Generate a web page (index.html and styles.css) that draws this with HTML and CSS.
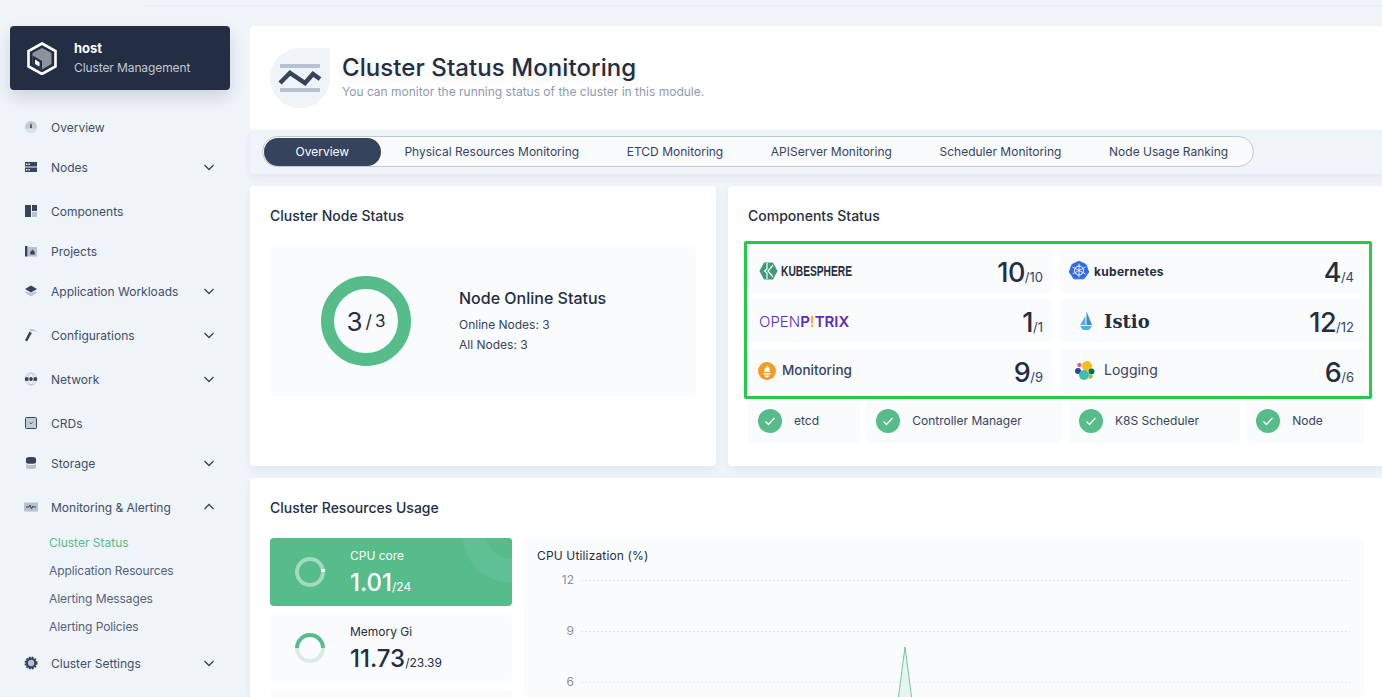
FILE: index.html
```html
<!DOCTYPE html>
<html>
<head>
  <title>Cluster Status Monitoring</title>
  <link rel="stylesheet" href="styles.css">
</head>
<body>
  <div class="top-edge"></div>
  <div class="app">
    <aside class="sidebar">
      <div class="host-card">
        <svg class="host-icon" width="30" height="33" viewBox="0 0 30 33">
          <polygon points="15,1.5 28.5,9 28.5,24.5 15,32 1.5,24.5 1.5,9" fill="none" stroke="#fff" stroke-width="2.6"/>
          <polygon points="15,6 24.5,11 24.5,22 15,27.5 5.5,22 5.5,11" fill="#8b93a1"/>
          <polygon points="5.5,13.5 15,19 15,27.5 5.5,22" fill="#242e42"/>
          <polygon points="8,17.5 12.5,20.2 12.5,24.5 8,22" fill="#fff"/>
        </svg>
        <div>
          <div class="host-name">host</div>
          <div class="host-desc">Cluster Management</div>
        </div>
      </div>
      <nav class="nav">
        <div class="nav-item">
          <svg class="nav-icon" viewBox="0 0 16 16"><circle cx="8" cy="8" r="6" fill="#c3ccd6"/><path d="M2.5 9.5a5.6 5.6 0 0 0 11 0z" fill="#dbe2e9"/><path d="M7.6 4.500h.8l.5 3.800a.9.9 0 1 1-1.800 0z" fill="#36435c"/></svg>
          <span>Overview</span>
        </div>
        <div class="nav-item has-sub">
          <svg class="nav-icon" viewBox="0 0 16 16"><rect x="2" y="3" width="12" height="4.500" fill="#36435c"/><rect x="2" y="8.500" width="12" height="4.500" fill="#36435c"/><path d="M3 4.500h1.400v1.400H3zM5.500 4.500h1.400v1.400H5.500zM3 10h1.400v1.400H3zM5.500 10h1.400v1.400H5.500z" fill="#fff"/></svg>
          <span>Nodes</span>
          <svg class="chevron" viewBox="0 0 16 16"><polyline points="3.5,6 8,10.5 12.5,6"/></svg>
        </div>
        <div class="nav-item">
          <svg class="nav-icon" viewBox="0 0 16 16"><rect x="2" y="2" width="6" height="12" fill="#36435c"/><rect x="9" y="2" width="5" height="6" fill="#36435c"/><rect x="9" y="9" width="5" height="5" fill="#b6c2cf"/></svg>
          <span>Components</span>
        </div>
        <div class="nav-item">
          <svg class="nav-icon" viewBox="0 0 16 16"><rect x="2" y="3" width="2.5" height="10.5" fill="#36435c"/><rect x="5" y="4" width="9" height="9.5" fill="#b6c2cf"/><path d="M9.5 6.5l2.2 2.4v2.6H7.3V8.9z" fill="#36435c"/></svg>
          <span>Projects</span>
        </div>
        <div class="nav-item has-sub">
          <svg class="nav-icon" viewBox="0 0 16 16"><path d="M2 9.500l2-1 4 2 4-2 2 1L8 13.500z" fill="#b6c2cf"/><path d="M8 2.500l6 3.500-6 3.500L2 6z" fill="#36435c"/></svg>
          <span>Application Workloads</span>
          <svg class="chevron" viewBox="0 0 16 16"><polyline points="3.5,6 8,10.5 12.5,6"/></svg>
        </div>
        <div class="nav-item has-sub">
          <svg class="nav-icon" viewBox="0 0 16 16"><path d="M6 2.500c3-1 6 0 8 2.500-2-1-4-1.300-5.500-.5z" fill="#b6c2cf"/><path d="M6.500 4.500l2.300 1.600L4 14.500l-2-1.300z" fill="#36435c"/></svg>
          <span>Configurations</span>
          <svg class="chevron" viewBox="0 0 16 16"><polyline points="3.5,6 8,10.5 12.5,6"/></svg>
        </div>
        <div class="nav-item has-sub">
          <svg class="nav-icon" viewBox="0 0 16 16"><circle cx="8" cy="8" r="6" fill="none" stroke="#c3ccd6" stroke-width="1"/><ellipse cx="8" cy="8" rx="2.700" ry="6" fill="none" stroke="#c3ccd6" stroke-width="1"/><rect x="2" y="6" width="3.400" height="4" rx="1.500" fill="#36435c"/><rect x="6.300" y="6" width="3.400" height="4" rx="1.500" fill="#36435c"/><rect x="10.600" y="6" width="3.400" height="4" rx="1.500" fill="#36435c"/></svg>
          <span>Network</span>
          <svg class="chevron" viewBox="0 0 16 16"><polyline points="3.5,6 8,10.5 12.5,6"/></svg>
        </div>
        <div class="nav-item">
          <svg class="nav-icon" viewBox="0 0 16 16"><rect x="2.500" y="2.500" width="11" height="11" rx="1" fill="#c3ccd6" stroke="#36435c"/><polyline points="6.500,7.300 8,8.800 9.500,7.300" fill="none" stroke="#36435c"/></svg>
          <span>CRDs</span>
        </div>
        <div class="nav-item has-sub">
          <svg class="nav-icon" viewBox="0 0 16 16"><path d="M3 3.500C3 2.500 5 2 8 2s5 .5 5 1.500V7.500c0 .7-2 1.300-5 1.300s-5-.6-5-1.300z" fill="#36435c"/><path d="M3 9c1 .8 3 1.100 5 1.100S12 9.800 13 9v3.500C13 13.500 11 14 8 14s-5-.5-5-1.500z" fill="#b6c2cf"/></svg>
          <span>Storage</span>
          <svg class="chevron" viewBox="0 0 16 16"><polyline points="3.5,6 8,10.5 12.5,6"/></svg>
        </div>
        <div class="nav-item">
          <svg class="nav-icon" viewBox="0 0 16 16"><rect x="1" y="3.500" width="14" height="9" rx="1" fill="#b6c2cf"/><polyline points="3,8 6,8 7,6 8.500,10 10,7 10.700,8 13,8" fill="none" stroke="#36435c"/></svg>
          <span>Monitoring &amp; Alerting</span>
          <svg class="chevron" viewBox="0 0 16 16"><polyline points="3.5,10 8,5.500 12.5,10"/></svg>
        </div>
        <div class="sub-nav">
          <div class="sub-item active">Cluster Status</div>
          <div class="sub-item">Application Resources</div>
          <div class="sub-item">Alerting Messages</div>
          <div class="sub-item">Alerting Policies</div>
        </div>
        <div class="nav-item has-sub">
          <svg class="nav-icon" viewBox="0 0 16 16"><circle cx="8" cy="8" r="4.300" fill="#b6c2cf" stroke="#36435c" stroke-width="2.200"/><circle cx="8" cy="8" r="5.700" fill="none" stroke="#36435c" stroke-width="1.600" stroke-dasharray="1.800 1.200"/></svg>
          <span>Cluster Settings</span>
          <svg class="chevron" viewBox="0 0 16 16"><polyline points="3.5,6 8,10.5 12.5,6"/></svg>
        </div>
      </nav>
    </aside>

    <main class="main">
      <section class="page-head">
        <div class="page-icon">
          <svg width="60" height="60" viewBox="0 0 60 60">
            <rect x="10" y="16" width="40" height="4" fill="#b6c2cf"/>
            <rect x="10" y="40" width="40" height="4" fill="#b6c2cf"/>
            <polyline points="10,35 20,25 35,35 43,26 50,31" fill="none" stroke="#36435c" stroke-width="4.500"/>
          </svg>
        </div>
        <div class="page-text">
          <h1 class="page-title">Cluster Status Monitoring</h1>
          <p class="page-desc">You can monitor the running status of the cluster in this module.</p>
        </div>
      </section>

      <div class="tab-bar">
        <div class="tabs">
          <div class="tab active">Overview</div>
          <div class="tab">Physical Resources Monitoring</div>
          <div class="tab">ETCD Monitoring</div>
          <div class="tab">APIServer Monitoring</div>
          <div class="tab">Scheduler Monitoring</div>
          <div class="tab">Node Usage Ranking</div>
        </div>
      </div>

      <div class="status-row">
        <section class="card">
          <h2 class="card-title">Cluster Node Status</h2>
          <div class="node-box">
            <div class="donut"><span class="donut-num">3</span><span class="donut-sep">/</span><span class="donut-total">3</span></div>
            <div class="node-info">
              <div class="node-title">Node Online Status</div>
              <div class="node-line">Online Nodes: 3</div>
              <div class="node-line">All Nodes: 3</div>
            </div>
          </div>
        </section>

        <section class="card components">
          <h2 class="card-title">Components Status</h2>
          <div class="comp-grid">
            <div class="comp-tile">
              <div class="logo">
                <svg class="ks-icon" width="19" height="18" viewBox="0 0 19 18"><polygon points="5,0.500 14,0.500 18.500,9 14,17.500 5,17.500 0.500,9" fill="#3e9b76"/><path d="M8 1L8 7 5.500 9 8 11V17M14 3L9 9 14 15" fill="none" stroke="#fff" stroke-width="1.200"/></svg>
                <span class="kubesphere">KUBESPHERE</span>
              </div>
              <div class="count"><b>10</b>/10</div>
            </div>
            <div class="comp-tile">
              <div class="logo">
                <svg class="k8s-icon" width="20" height="20" viewBox="0 0 20 20"><polygon points="10,0.300 17,3.500 19.700,11 15,17.800 5,17.800 0.300,11 3,3.500" fill="#326ce5" stroke="#326ce5" stroke-linejoin="round"/><circle cx="10" cy="9.500" r="4.500" fill="none" stroke="#fff"/><path d="M10 2.500V16.500M3.500 6l13 7M16.500 6l-13 7" stroke="#fff" stroke-width=".8"/></svg>
                <span class="kubernetes">kubernetes</span>
              </div>
              <div class="count"><b>4</b>/4</div>
            </div>
            <div class="comp-tile">
              <div class="logo">
                <span class="openpitrix">OPEN<b>P<i>!</i>TRIX</b></span>
              </div>
              <div class="count"><b>1</b>/1</div>
            </div>
            <div class="comp-tile">
              <div class="logo">
                <svg class="istio-icon" width="14" height="20" viewBox="0 0 14 20"><polygon points="7.500,0.500 7.500,14 13,14" fill="#2e8fd0"/><polygon points="6.500,5 6.500,14 1,14" fill="#4cb2e6"/><polygon points="1,15 13,15 10,19 4,19" fill="#4cb2e6"/></svg>
                <span class="istio">Istio</span>
              </div>
              <div class="count"><b>12</b>/12</div>
            </div>
            <div class="comp-tile">
              <div class="logo">
                <svg class="prom-icon" width="18" height="18" viewBox="0 0 18 18"><circle cx="9" cy="9" r="9" fill="#f29b27"/><path d="M9 3c.6 2 2.800 2.500 2.800 5.200 0 .6-.2 1.200-.5 1.800H6.700c-.4-.7-.6-1.400-.5-2.100.3-1.100.9-1.300 1.200-2.400C8.400 6.500 8.900 5 9 3z" fill="#fff"/><rect x="5.500" y="11" width="7" height="1.500" fill="#fff"/><path d="M6.500 13.500h5c-.3 1.200-1.300 2-2.500 2s-2.200-.8-2.500-2z" fill="#fff"/></svg>
                <span class="logo-text">Monitoring</span>
              </div>
              <div class="count"><b>9</b>/9</div>
            </div>
            <div class="comp-tile">
              <div class="logo">
                <svg class="es-icon" width="20" height="20" viewBox="0 0 20 20"><circle cx="4.300" cy="4" r="2" fill="#ec4b8b"/><circle cx="12" cy="5" r="5" fill="#f4bd19"/><circle cx="3" cy="10" r="3" fill="#34458f"/><circle cx="16.500" cy="10.500" r="3" fill="#0f6e5a"/><circle cx="9" cy="14" r="5" fill="#3ebeb0"/><circle cx="15.500" cy="15.500" r="2.200" fill="#93c83e"/></svg>
                <span class="logo-text logging">Logging</span>
              </div>
              <div class="count"><b>6</b>/6</div>
            </div>
          </div>
          <div class="service-row">
            <div class="service"><span class="check"><svg width="14" height="14" viewBox="0 0 14 14"><polyline points="2.500,7.500 5.500,10.500 11.500,4"/></svg></span><span class="service-name">etcd</span></div>
            <div class="service"><span class="check"><svg width="14" height="14" viewBox="0 0 14 14"><polyline points="2.500,7.500 5.500,10.500 11.500,4"/></svg></span><span class="service-name">Controller Manager</span></div>
            <div class="service"><span class="check"><svg width="14" height="14" viewBox="0 0 14 14"><polyline points="2.500,7.500 5.500,10.500 11.500,4"/></svg></span><span class="service-name">K8S Scheduler</span></div>
            <div class="service"><span class="check"><svg width="14" height="14" viewBox="0 0 14 14"><polyline points="2.500,7.500 5.500,10.500 11.500,4"/></svg></span><span class="service-name">Node</span></div>
          </div>
          <div class="highlight"></div>
        </section>
      </div>

      <section class="card usage">
        <h2 class="card-title">Cluster Resources Usage</h2>
        <div class="usage-grid">
          <div class="res-list">
            <div class="res-tile selected">
              <span class="res-glow"></span>
              <svg width="30" height="30" viewBox="0 0 30 30">
                <circle cx="15" cy="15" r="13" fill="none" stroke="#fff" stroke-opacity=".45" stroke-width="4"/>
                <rect x="26" y="12" width="4" height="3" fill="#fff"/>
              </svg>
              <div class="res-text">
                <div class="res-label">CPU core</div>
                <div class="res-value"><b>1.01</b>/24</div>
              </div>
            </div>
            <div class="res-tile">
              <svg width="30" height="30" viewBox="0 0 30 30">
                <path d="M2 15a13 13 0 0 0 26 0" fill="none" stroke="#d5eee2" stroke-width="4"/>
                <path d="M2 15a13 13 0 0 1 26 0" fill="none" stroke="#55bc8a" stroke-width="4"/>
              </svg>
              <div class="res-text">
                <div class="res-label">Memory Gi</div>
                <div class="res-value"><b>11.73</b>/23.39</div>
              </div>
            </div>
            <div class="res-tile"></div>
          </div>
          <div class="chart">
            <div class="chart-title">CPU Utilization (%)</div>
            <svg class="chart-svg" width="840" height="131" viewBox="0 0 840 131">
              <g class="grid-lines">
                <line x1="57" y1="14.500" x2="826" y2="14.500"/>
                <line x1="57" y1="65.500" x2="826" y2="65.500"/>
                <line x1="57" y1="116.500" x2="826" y2="116.500"/>
              </g>
              <g class="axis-labels">
                <text x="50" y="18">12</text>
                <text x="50" y="69">9</text>
                <text x="50" y="120">6</text>
              </g>
              <polygon points="363,218 381,81 399,218" fill="#e6f5ee" stroke="#55bc8a" stroke-opacity=".8"/>
            </svg>
          </div>
        </div>
      </section>
    </main>
  </div>
</body>
</html>
```

FILE: styles.css
```css
* {
  box-sizing: border-box;
}
html, body {
  margin: 0;
  height: 697px;
  overflow: hidden;
}
body {
  background-color: #eff4f9;
  font-family: Inter, "Liberation Sans", sans-serif;
  font-size: 12px;
  color: #242e42;
}
h1, h2, p {
  margin: 0;
}

.top-edge {
  height: 6px;
  margin-left: 145px;
  border-bottom: 1px solid #e8edf3;
}
.app {
  display: flex;
  height: 691px;
  overflow: hidden;
}

/* sidebar */
.sidebar {
  flex: 0 0 250px;
  padding: 20px 20px 0 10px;
}
.host-card {
  display: flex;
  align-items: center;
  gap: 17px;
  height: 64px;
  padding-left: 17px;
  background-color: #242e42;
  border-radius: 4px;
  box-shadow: 0 8px 16px rgba(36, 46, 66, 0.15);
  color: #fff;
}
.host-name {
  font-size: 13px;
  font-weight: 700;
  line-height: 20px;
}
.host-desc {
  line-height: 20px;
  letter-spacing: -0.1px;
  color: #c1c9d1;
}
.nav {
  margin-top: 17px;
}
.nav-item {
  display: flex;
  align-items: center;
  height: 40px;
  padding-left: 14px;
  color: #404e68;
}
.nav-item.has-sub {
  height: 44px;
  padding-bottom: 4px;
}
.nav-icon {
  flex: none;
  width: 16px;
  height: 16px;
  margin: 0 12px 0 -1px;
}
.chevron {
  flex: none;
  width: 16px;
  height: 16px;
  margin-left: auto;
  margin-right: 13px;
  fill: none;
  stroke: #36435c;
  stroke-width: 1.3;
}
.sub-nav {
  padding: 2px 0 2px 39px;
}
.sub-item {
  height: 28px;
  line-height: 28px;
  letter-spacing: -0.1px;
  color: #566279;
}
.sub-item.active {
  letter-spacing: 0;
  color: #55bc8a;
}

/* main column */
.main {
  flex: 0 0 1134px;
  padding-top: 20px;
}
.page-head {
  display: flex;
  align-items: center;
  gap: 12px;
  height: 104px;
  padding-left: 20px;
  background-color: #fff;
  border-radius: 4px 0 0 0;
}
.page-icon {
  width: 60px;
  height: 60px;
  background-color: #eff4f9;
  border-radius: 50% 0 50% 50%;
}
.page-text {
  padding-bottom: 4px;
}
.page-title {
  font-size: 24px;
  font-weight: 500;
  line-height: 32px;
  letter-spacing: 0.08px;
  text-shadow: 0 4px 8px rgba(36, 46, 66, 0.1);
}
.page-desc {
  line-height: 16px;
  color: #8e9aae;
}

.tab-bar {
  height: 44px;
  padding: 6px 0 0 12px;
  border-radius: 0 0 0 4px;
  box-shadow: 0 4px 8px rgba(36, 46, 66, 0.06);
}
.tabs {
  display: inline-flex;
  align-items: center;
  height: 31px;
  padding: 0 1px;
  background-color: #f9fbfd;
  border: 1px solid #c1c9d1;
  border-radius: 16px;
}
.tab {
  height: 28px;
  line-height: 28px;
  padding: 0 23.8px;
  color: #36435c;
}
.tab.active {
  padding: 0 31.5px;
  background-color: #36435c;
  border-radius: 14px;
  color: #fff;
}

.status-row {
  display: grid;
  grid-template-columns: 466px 656px;
  gap: 12px;
  margin-top: 12px;
}
.card {
  position: relative;
  height: 280px;
  padding: 20px;
  background-color: #fff;
  border-radius: 4px;
  box-shadow: 0 4px 8px rgba(36, 46, 66, 0.06);
}
.card-title {
  font-size: 14px;
  font-weight: 500;
  line-height: 20px;
}

.node-box {
  display: flex;
  align-items: center;
  height: 150px;
  margin-top: 20px;
  padding-left: 51px;
  background-color: #f9fbfd;
  border-radius: 4px;
}
.donut {
  display: flex;
  align-items: center;
  justify-content: center;
  width: 90px;
  height: 90px;
  border: 13px solid #55bc8a;
  border-radius: 50%;
}
.donut-num {
  font-size: 26px;
}
.donut-sep {
  margin: 0 3px;
  font-size: 18px;
}
.donut-total {
  font-size: 17px;
}
.node-info {
  margin-left: 48px;
  padding-bottom: 2px;
}
.node-title {
  font-size: 16px;
  font-weight: 500;
  line-height: 24px;
  margin-bottom: 5px;
}
.node-line {
  line-height: 20px;
  color: #36435c;
}

.comp-grid {
  display: grid;
  grid-template-columns: 305px 305px;
  gap: 6px;
  margin-top: 23px;
}
.comp-tile {
  display: flex;
  align-items: center;
  justify-content: space-between;
  height: 44px;
  padding: 0 10px;
  background-color: #f9fbfd;
  border-radius: 4px;
}
.logo {
  display: flex;
  align-items: center;
}
.ks-icon {
  margin-left: 1px;
}
.kubesphere {
  margin-left: 3px;
  font-family: "Liberation Sans", sans-serif;
  font-size: 14px;
  font-weight: 700;
  transform: scaleX(0.73);
  transform-origin: left center;
}
.kubernetes {
  margin-left: 5px;
  font-size: 12px;
  font-weight: 700;
  letter-spacing: 0.3px;
}
.openpitrix {
  margin-left: 1px;
  font-size: 15px;
  font-weight: 300;
  color: #5b2eb5;
}
.openpitrix b {
  font-weight: 600;
}
.openpitrix i {
  font-style: normal;
  color: #f5a623;
}
.istio {
  margin-left: 11px;
  font-family: "DejaVu Serif", serif;
  font-size: 18px;
  font-weight: 700;
}
.istio-icon {
  margin-left: 10px;
}
.logo-text {
  margin-left: 6px;
  padding-bottom: 2px;
  font-size: 13.5px;
  font-weight: 500;
  color: #36435c;
}
.logo-text.logging {
  margin-left: 9px;
  padding-bottom: 3px;
  font-size: 14px;
  font-weight: 400;
}
.es-icon {
  margin-left: 6px;
}
.count {
  padding-top: 2px;
  font-size: 13px;
  color: #36435c;
}
.count b {
  font-size: 27px;
  font-weight: 500;
  letter-spacing: -0.5px;
  color: #242e42;
}

.service-row {
  display: flex;
  gap: 6px;
  margin-top: 6px;
}
.service {
  display: flex;
  align-items: center;
  flex: 1 1 auto;
  gap: 12px;
  height: 44px;
  padding: 0 40px 0 10px;
  background-color: #f9fbfd;
  border-radius: 4px;
  color: #36435c;
}
.service-name {
  padding-bottom: 2px;
}
.check {
  display: flex;
  align-items: center;
  justify-content: center;
  width: 24px;
  height: 24px;
  background-color: #55bc8a;
  border-radius: 50%;
}
.check polyline {
  fill: none;
  stroke: #fff;
  stroke-width: 1.4;
}

/* review box drawn over the components */
.highlight {
  position: absolute;
  left: 16px;
  top: 55px;
  width: 628px;
  height: 158px;
  border: 3px solid #25cb47;
  border-radius: 2px;
}

.usage {
  height: 219px;
  margin-top: 12px;
  padding-bottom: 0;
  overflow: hidden;
  border-radius: 4px 4px 0 0;
}
.usage-grid {
  display: grid;
  grid-template-columns: 242px 840px;
  gap: 12px;
  margin-top: 20px;
}
.res-list {
  display: flex;
  flex-direction: column;
  gap: 8px;
  height: 159px;
  overflow: hidden;
}
.res-tile {
  position: relative;
  display: flex;
  flex: none;
  align-items: center;
  gap: 25px;
  height: 68px;
  padding-left: 25px;
  background-color: #f9fbfd;
  border-radius: 4px;
  overflow: hidden;
}
.res-tile.selected {
  background-color: #55bc8a;
  color: #fff;
}
.res-glow {
  position: absolute;
  right: -50px;
  top: -55px;
  width: 100px;
  height: 100px;
  background-color: #5fc095;
  border-radius: 50%;
}
.res-glow::after {
  content: "";
  position: absolute;
  left: 24px;
  top: 24px;
  width: 52px;
  height: 52px;
  background-color: #55bc8a;
  border-radius: 50%;
}
.res-text {
  position: relative;
  align-self: flex-start;
  padding-top: 10px;
}
.res-label {
  line-height: 16px;
}
.res-value {
  margin-top: 3px;
  font-size: 12px;
  line-height: 32px;
}
.res-value b {
  font-size: 24px;
  font-weight: 500;
}

.chart {
  height: 159px;
  background-color: #f9fbfd;
  border-radius: 4px;
}
.chart-title {
  height: 28px;
  padding: 11px 13px 0;
  line-height: 14px;
  letter-spacing: 0.15px;
}
.chart-svg {
  display: block;
}
.grid-lines line {
  stroke: #e3e7ec;
  stroke-dasharray: 2 2;
}
.axis-labels text {
  font-size: 12px;
  text-anchor: end;
  fill: #8a929e;
}
```
